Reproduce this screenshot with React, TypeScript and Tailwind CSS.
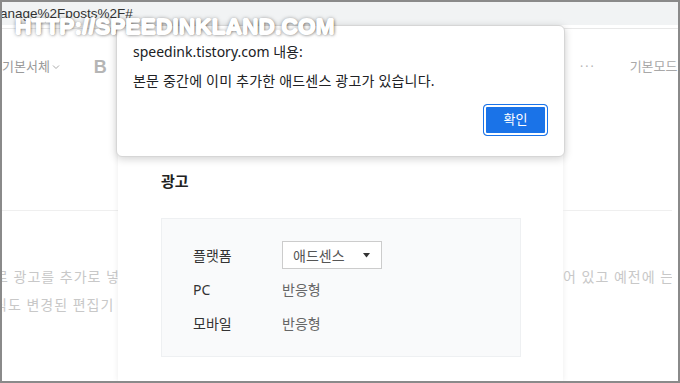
import React from "react";

const KR = "font-['Noto_Sans','Noto_Sans_CJK_KR',sans-serif]";

const rows = [
  { label: "PC", value: "반응형" },
  { label: "모바일", value: "반응형" },
];

const App: React.FC = () => {
  return (
    <div className={`relative w-[680px] h-[383px] overflow-hidden border-2 border-[#8a8a8a] bg-white flex flex-col ${KR}`}>
      {/* address bar */}
      <div className="h-[23px] bg-[#f1f3f4] flex items-center shrink-0">
        <span className="text-[13.5px] leading-none text-[#333] -ml-[2px] font-['Liberation_Sans',sans-serif]">anage%2Fposts%2F#</span>
      </div>

      {/* editor */}
      <div className="mt-[3px] flex flex-1 min-h-0 border-t border-[#e8e8e8]">
        {/* left part of editor */}
        <div className="w-[116px] shrink-0 overflow-hidden">
          <div className="h-[182px] border-b border-[#efefef] pt-[28px]">
            <div className="flex items-center h-[20px] whitespace-nowrap">
              <span className="text-[13px] text-[#9a9a9a]">기본서체</span>
              <svg width="8" height="6" viewBox="0 0 8 6" className="ml-[2px]">
                <path d="M1 1.5 L4 4.5 L7 1.5" fill="none" stroke="#aaa" strokeWidth="1" />
              </svg>
              <span className="ml-[34px] text-[18px] font-bold text-[#b5b5b5] font-['Liberation_Sans',sans-serif]">B</span>
            </div>
          </div>
          <div className="pt-[52px] text-[14px] leading-[28px] text-[#c8c8c8] whitespace-nowrap tracking-[1px]">
            <p className="-ml-[7px]">로 광고를 추가로 넣</p>
            <p className="-ml-[8px]">식도 변경된 편집기</p>
          </div>
        </div>

        {/* settings panel */}
        <div className="w-[445px] shrink-0 bg-white shadow-[0_0_6px_rgba(0,0,0,0.08)] px-[43px] pt-[142px]">
          <h2 className="text-[15px] leading-[20px] font-bold text-[#222]">광고</h2>
          <div className="mt-[27px] w-[360px] h-[139px] bg-[#f9fafb] border border-[#eef0f2] px-[31px] pt-[22px] flex flex-col gap-[6px]">
            <div className="flex items-center h-[28px]">
              <span className="w-[89px] text-[14px] text-[#333]">플랫폼</span>
              <div className="w-[100px] h-[28px] border border-[#ccc] bg-white flex items-center justify-between pl-[10px] pr-[11px]">
                <span className="text-[14px] text-[#555]">애드센스</span>
                <svg width="7" height="5" viewBox="0 0 7 5">
                  <path d="M0 0 H7 L3.5 4.5 Z" fill="#333" />
                </svg>
              </div>
            </div>
            {rows.map((r) => (
              <div key={r.label} className="flex items-center h-[28px]">
                <span className="w-[89px] text-[14px] text-[#333]">{r.label}</span>
                <span className="text-[14px] text-[#666]">{r.value}</span>
              </div>
            ))}
          </div>
        </div>

        {/* right part of editor */}
        <div className="flex-1 overflow-hidden pr-[6px]">
          <div className="h-[182px] border-b border-[#efefef] pt-[28px]">
            <div className="flex items-center h-[20px] whitespace-nowrap">
              <span className="ml-[17px] text-[12px] tracking-[2px] text-[#b5b5b5]">···</span>
              <span className="ml-[34px] text-[13px] text-[#a8a8a8]">기본모드</span>
            </div>
          </div>
          <div className="pt-[52px] text-[14px] leading-[28px] text-[#c8c8c8] whitespace-nowrap tracking-[1px] overflow-hidden">
            <p>어 있고 예전에 는</p>
          </div>
        </div>
      </div>

      {/* alert dialog */}
      <div className="absolute left-[114px] top-[23px] w-[449px] h-[132px] bg-white rounded-[6px] border border-[#d6d6d6] shadow-[0_2px_8px_rgba(0,0,0,0.18)] px-[16px] pt-[15px] flex flex-col">
        <p className="text-[14px] leading-[22px] text-[#202124]">speedink.tistory.com 내용:</p>
        <p className="mt-[8px] text-[14px] leading-[20px] tracking-[0.2px] text-[#202124]">본문 중간에 이미 추가한 애드센스 광고가 있습니다.</p>
        <div className="mt-[13px] flex justify-end">
          <button className="w-[65px] h-[32px] rounded-[4px] bg-[#1a73e8] text-white text-[13px] border border-[#1a73e8] shadow-[inset_0_0_0_2px_#fff] flex items-center justify-center">
            확인
          </button>
        </div>
      </div>

      {/* watermark, drawn over everything */}
      <div className="absolute left-[13px] top-[14px] text-[22.5px] leading-none font-bold tracking-[0.2px] text-white font-['Liberation_Sans',sans-serif] [text-shadow:0.7px_0_0_#fff,-0.7px_0_0_#fff,0_0.7px_0_#fff,0_-0.7px_0_#fff,0_0_4px_rgba(0,0,0,0.55),1px_1px_3px_rgba(0,0,0,0.35)] pointer-events-none">
        HTTP://SPEEDINKLAND.COM
      </div>
    </div>
  );
};

export default App;
